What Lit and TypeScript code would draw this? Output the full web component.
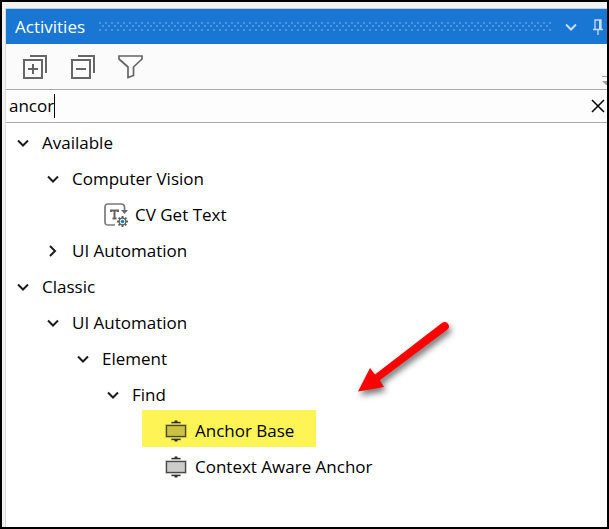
import { LitElement, html, css, svg, nothing } from "lit";
import { customElement, state } from "lit/decorators.js";

interface TreeNode {
  id: string;
  label: string;
  icon?: "cv" | "anchor";
  marked?: boolean;
  children?: TreeNode[];
}

const TREE: TreeNode[] = [
  {
    id: "available",
    label: "Available",
    children: [
      { id: "cv", label: "Computer Vision", children: [{ id: "cv-text", label: "CV Get Text", icon: "cv" }] },
      { id: "ui-1", label: "UI Automation", children: [] },
    ],
  },
  {
    id: "classic",
    label: "Classic",
    children: [
      {
        id: "ui-2",
        label: "UI Automation",
        children: [
          {
            id: "element",
            label: "Element",
            children: [
              {
                id: "find",
                label: "Find",
                children: [
                  { id: "anchor-base", label: "Anchor Base", icon: "anchor", marked: true },
                  { id: "context-anchor", label: "Context Aware Anchor", icon: "anchor" },
                ],
              },
            ],
          },
        ],
      },
    ],
  },
];

const teeth = [0, 45, 90, 135, 180, 225, 270, 315].map(
  (a) => svg`<path d="M18.5 13V15.5" transform="rotate(${a} 18.5 18.5)" stroke="#5f6163" stroke-width="2"/>`
);

const cvIcon = html`<svg width="24" height="24" viewBox="0 0 24 24" fill="none" aria-hidden="true">
  <path d="M11 22H4Q1 22 1 19V4Q1 1 4 1H17Q20.500 1 20.500 4V7" stroke="#77797b" stroke-width="1.700" />
  <path d="M17 7H24L20.500 11Z" fill="#66686a" />
  <path d="M7 9V7.500H14V9M10.500 7.500V15.500M8.500 15.500H12.500" stroke="#606264" stroke-width="2" />
  ${teeth}
  <circle cx="18.500" cy="18.500" r="3.300" fill="#fff" stroke="#5f6163" stroke-width="1.300" />
  <circle cx="18.500" cy="18.500" r="1.800" fill="#1680e0" />
</svg>`;

const anchorIcon = html`<svg width="22" height="22" viewBox="0 0 22 22" aria-hidden="true">
  <path d="M6 4V1H9V0H13V1H16V4ZM6 18V21H9V22H13V21H16V18Z" fill="#000" opacity=".12" />
  <rect x="0" y="4" width="22" height="14" fill="#000" opacity=".12" />
  <rect x="1.500" y="5.500" width="19" height="11" fill="#000" fill-opacity=".09" stroke="#30302c" stroke-opacity=".85" stroke-width="1.300" />
  <path d="M11 0L13 2H15.500V3.200H6.500V2H9ZM11 22L13 20H15.500V18.800H6.500V20H9Z" fill="#30302c" />
</svg>`;

@customElement("app-root")
export class AppRoot extends LitElement {
  @state() private closed = new Set<string>(["ui-1"]);
  @state() private query = "ancor";

  static styles = css`
    :host {
      display: block;
      font: 17px/36px "Open Sans", "Noto Sans", sans-serif;
      color: #000;
    }
    * {
      box-sizing: border-box;
    }
    svg {
      display: block;
      flex: none;
      overflow: visible;
    }
    button {
      display: grid;
      place-items: center;
      flex: none;
      padding: 0;
      border: 0;
      background: none;
      color: inherit;
    }
    .frame {
      min-height: 100vh;
      border: 2px solid #000;
      background: #f2f2f2;
      padding: 6px 0 0 3px;
      display: flex;
      overflow: hidden;
    }
    .panel {
      flex: 1;
      min-width: 0;
      border-left: 1px solid #dadada;
      background: #fff;
    }
    .title {
      display: flex;
      align-items: center;
      height: 36px;
      padding-left: 9px;
      border-top: 1px solid #b9d2ee;
      background: #1976d2;
      color: #fff;
    }
    h1 {
      margin: 0;
      font-size: 17px;
      font-weight: 400;
      width: 84px;
      white-space: nowrap;
      line-height: 36px;
    }
    .grip {
      flex: 1;
      min-width: 0;
      height: 9px;
      overflow: hidden;
      color: #4f96de;
    }
    .title button {
      width: 24px;
      height: 24px;
      color: #c7def5;
    }
    .title .menu {
      margin-left: 8px;
    }
    .title .pin {
      margin-left: 6px;
      width: 18px;
    }
    .tools {
      display: flex;
      align-items: center;
      height: 45px;
      padding-left: 17px;
      gap: 24px;
      background: #fbfbfb;
      color: #666;
    }
    .tools button {
      height: 24px;
      width: 24px;
    }
    .tools .more {
      margin: 28px 0 0 auto;
      width: 5px;
      height: 10px;
      color: #a0a0a0;
    }
    .search {
      display: flex;
      align-items: center;
      height: 34px;
      border: solid #ababab;
      border-width: 1px 0;
      background: #fdfdfd;
      padding-left: 3px;
    }
    .search label {
      flex: 1;
      display: flex;
      min-width: 0;
    }
    input {
      field-sizing: content;
      width: auto;
      min-width: 1px;
      height: 24px;
      padding: 0;
      border: 0;
      border-right: 1px solid #000;
      background: none;
      font: inherit;
      line-height: 24px;
      color: inherit;
      outline: none;
      caret-color: transparent;
    }
    .clear {
      width: 19px;
      height: 24px;
    }
    ul {
      list-style: none;
      margin: 0;
      padding: 0;
    }
    .tree {
      padding: 2px 0 0 5px;
    }
    .tree ul {
      padding-left: 30px;
    }
    .row {
      display: flex;
      align-items: center;
      height: 36px;
      white-space: nowrap;
    }
    .row button {
      width: 24px;
      height: 24px;
      margin-right: 7px;
      color: #1c1c1c;
    }
    .leaf {
      width: max-content;
    }
    .cv {
      padding-left: 33px;
      gap: 7px;
    }
    .anchor {
      margin-left: 11px;
      padding: 0 22px 0 23px;
      gap: 8px;
    }
    .marked {
      position: relative;
      z-index: 0;
    }
    .marked::before {
      content: "";
      position: absolute;
      z-index: -1;
      inset: -3px 0 2px;
      background: #fff455;
    }
    .spot {
      position: relative;
    }
    .arrow {
      position: absolute;
      left: 253px;
      bottom: 19px;
      filter: drop-shadow(2px 4px 3px rgb(0 0 0 / 55%));
      pointer-events: none;
    }
  `;

  private toggle(id: string) {
    const next = new Set(this.closed);
    if (!next.delete(id)) next.add(id);
    this.closed = next;
  }

  private collapseAll() {
    this.closed = new Set(["available", "classic"]);
  }

  private renderNode(node: TreeNode): unknown {
    if (!node.children) {
      return html`<li role="treeitem">
        <div class="row leaf ${node.icon} ${node.marked ? "marked" : ""}">
          ${node.icon === "cv" ? cvIcon : anchorIcon}<span>${node.label}</span>
        </div>
      </li>`;
    }
    const open = !this.closed.has(node.id);
    return html`<li role="treeitem" aria-expanded=${open}>
      <div class="row ${node.id === "find" ? "spot" : ""}">
        <button aria-label="Toggle ${node.label}" @click=${() => this.toggle(node.id)}>
          <svg width="12" height="12" viewBox="0 0 12 12" fill="none" stroke="currentColor" stroke-width="2">
            <path d=${open ? "M1 3.500L6 8.500L11 3.500" : "M3 1L8 6L3 11"} />
          </svg>
        </button>
        <span>${node.label}</span>
        ${node.id === "find"
          ? html`<svg class="arrow" width="96" height="76" viewBox="354 318 96 76" aria-hidden="true">
              <path
                d="M358 391.500L370 368L375 374.500L442.500 322.600A4.300 4.300 0 0 1 447.800 329.200L379.800 380.200L384 387Z"
                fill="#fe0000"
              />
            </svg>`
          : nothing}
      </div>
      ${open && node.children.length
        ? html`<ul role="group">
            ${node.children.map((c) => this.renderNode(c))}
          </ul>`
        : nothing}
    </li>`;
  }

  render() {
    return html`<div class="frame">
      <main class="panel">
        <header class="title">
          <h1>Activities</h1>
          <svg class="grip" height="9" aria-hidden="true">
            <defs>
              <pattern id="dots" width="6" height="7" patternUnits="userSpaceOnUse">
                <path d="M0 0h2v2h-2zM3 3h2v2h-2z" fill="currentColor" />
              </pattern>
            </defs>
            <rect width="100%" height="9" fill="url(#dots)" />
          </svg>
          <button class="menu" aria-label="Window menu">
            <svg width="12" height="12" viewBox="0 0 12 12" fill="none" stroke="currentColor" stroke-width="2">
              <path d="M1 3.500L6 8.500L11 3.500" />
            </svg>
          </button>
          <button class="pin" aria-label="Pin">
            <svg width="12" height="16" viewBox="0 0 12 16" fill="none" stroke="currentColor">
              <path d="M3 10V1H9V10M1 10.500H11M6 11V16" stroke-width="1.300" />
              <path d="M8 1V10" stroke-width="2" />
            </svg>
          </button>
        </header>
        <div class="tools" role="toolbar" aria-label="Activities">
          <button aria-label="Expand all" @click=${() => (this.closed = new Set())}>
            <svg width="24" height="24" viewBox="0 0 24 24" fill="none" stroke="currentColor" stroke-width="2">
              <path d="M1 5H19V23H1ZM7 1H23V18M10 9V19M5 14H15" />
            </svg>
          </button>
          <button aria-label="Collapse all" @click=${this.collapseAll}>
            <svg width="24" height="24" viewBox="0 0 24 24" fill="none" stroke="currentColor" stroke-width="2">
              <path d="M1 5H19V23H1ZM7 1H23V18M5 14H15" />
            </svg>
          </button>
          <button aria-label="Filter">
            <svg width="24" height="24" viewBox="1 0 24 24" fill="none" stroke="currentColor" stroke-width="1.700">
              <path d="M1 1H24V4L15.500 12V20.500L10 22.500V12L1 4Z" />
            </svg>
          </button>
          <button class="more" aria-label="More tools">
            <svg width="5" height="10" viewBox="0 0 5 10">
              <path d="M0 0H5V1H0ZM0 5H5V9H4Z" fill="currentColor" />
            </svg>
          </button>
        </div>
        <div class="search" role="search">
          <label>
            <input
              aria-label="Search activities"
              .value=${this.query}
              @input=${(e: Event) => (this.query = (e.target as HTMLInputElement).value)}
            />
          </label>
          <button class="clear" aria-label="Clear search" @click=${() => (this.query = "")}>
            <svg width="14" height="14" viewBox="0 0 14 14" stroke="#000" stroke-width="1.500">
              <path d="M1 1L13 13M13 1L1 13" />
            </svg>
          </button>
        </div>
        <ul class="tree" role="tree" aria-label="Activities">
          ${TREE.map((n) => this.renderNode(n))}
        </ul>
      </main>
    </div>`;
  }
}
